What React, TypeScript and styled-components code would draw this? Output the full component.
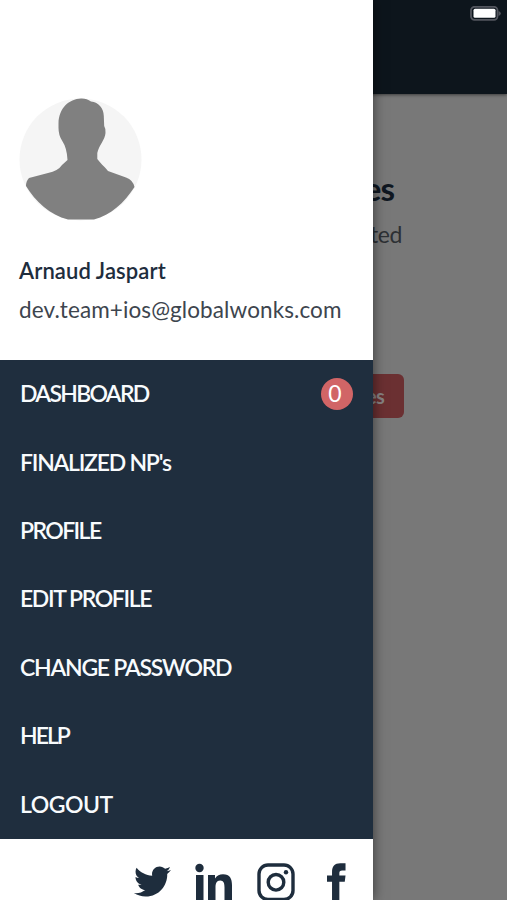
import React from "react";
import styled, { createGlobalStyle } from "styled-components";
import { FaTwitter } from "react-icons/fa";

const GlobalStyle = createGlobalStyle`
  *, *::before, *::after { box-sizing: border-box; }
  body { margin: 0; overflow: hidden; font-family: Lato, "Open Sans", sans-serif; }
`;

const Screen = styled.div`
  position: relative;
  width: 507px;
  height: 900px;
  overflow: hidden;
  background: #787878;
`;

const TopBar = styled.header`
  height: 93.5px;
  padding: 6px 5.5px 0 0;
  display: flex;
  justify-content: flex-end;
  align-items: flex-start;
  background: #0d151c;
  box-shadow: 0 1px 3px rgba(0, 0, 0, 0.5);
`;

const Page = styled.main`
  display: flex;
  flex-direction: column;
  align-items: flex-end;
`;

const PageTitle = styled.h1`
  margin: 74px 113px 0 0;
  font: 700 33px/40px Lato, sans-serif;
  letter-spacing: -1px;
  color: #0f1721;
`;

const PageText = styled.p`
  margin: 11px 105px 0 0;
  font: 400 23px/30px Lato, sans-serif;
  letter-spacing: -0.4px;
  color: #2d3034;
`;

const PageButton = styled.button`
  margin: 125px 103px 0 0;
  width: 300px;
  height: 44px;
  padding: 0 20px 0 0;
  border: 0;
  border-radius: 6px;
  background: #6b3032;
  color: #868282;
  text-align: right;
  font: 700 20px/40px Lato, sans-serif;
  letter-spacing: -0.7px;
`;

const Drawer = styled.aside`
  position: absolute;
  inset: 0 auto 0 0;
  width: 372.5px;
  display: flex;
  flex-direction: column;
  background: #fff;
  box-shadow: 0 0 12px rgba(0, 0, 0, 0.55);
`;

const Profile = styled.section`
  height: 360px;
  padding: 98px 19px 0;
`;

const Portrait = styled.svg`
  display: block;
  width: 123px;
  height: 123px;
`;

const Name = styled.div`
  width: max-content;
  margin-top: 36px;
  font-size: 22px;
  line-height: 28px;
  font-weight: 600;
  letter-spacing: 0.1px;
  color: #1e2d3d;
`;

const Email = styled.div`
  width: max-content;
  margin-top: 11px;
  font-size: 22.5px;
  line-height: 28px;
  letter-spacing: 0.1px;
  color: #3d454e;
`;

const Menu = styled.nav`
  height: 479px;
  background: #1f2e3e;
`;

const MenuItem = styled.a`
  display: flex;
  align-items: center;
  justify-content: space-between;
  height: 68.4px;
  padding: 0 20px;
  color: #f8fbfd;
`;

const Label = styled.span<{ $tracking: number }>`
  padding-bottom: 2px;
  font-size: 23px;
  line-height: 28px;
  font-weight: 600;
  white-space: nowrap;
  letter-spacing: ${(p) => p.$tracking}px;
`;

const Count = styled.span`
  width: 32px;
  height: 32px;
  border-radius: 50%;
  padding-right: 3px;
  background: #d16566;
  color: #fff;
  text-align: center;
  font-size: 23px;
  line-height: 31px;
`;

const Socials = styled.footer`
  flex: 1;
  display: flex;
  align-items: flex-start;
  justify-content: flex-end;
  gap: 24px;
  padding: 24px 27px 0 0;
  color: #1e2d3d;
  overflow: hidden;
`;

const SocialIcon = styled.svg<{ $w: number; $lead?: number }>`
  display: block;
  flex: none;
  width: ${(p) => p.$w}px;
  height: 38px;
  margin-left: ${(p) => p.$lead ?? 0}px;
`;

const Bird = styled(FaTwitter)`
  display: block;
  flex: none;
  width: 37px;
  height: 37px;
`;

const items = [
  { text: "DASHBOARD", tracking: -1.7, count: 0 },
  { text: "FINALIZED NP's", tracking: -1.25 },
  { text: "PROFILE", tracking: -1.6 },
  { text: "EDIT PROFILE", tracking: -1.4 },
  { text: "CHANGE PASSWORD", tracking: -1.25 },
  { text: "HELP", tracking: -2 },
  { text: "LOGOUT", tracking: -0.5 },
];

export default function App() {
  return (
    <Screen>
      <GlobalStyle />
      <TopBar>
        <svg width="32" height="15" viewBox="0 0 32 15">
          <rect x="1" y="0.8" width="26.5" height="13" rx="3.5" fill="none" stroke="#53565e" strokeWidth="1.8" />
          <rect x="3.5" y="2.800" width="22" height="9" rx="1.5" fill="#fff" />
          <path d="M28.500 5v5q2.300-.8 2.300-2.500T28.500 5z" fill="#53565e" />
        </svg>
      </TopBar>
      <Page>
        <PageTitle>es</PageTitle>
        <PageText>ted</PageText>
        <PageButton>es</PageButton>
      </Page>
      <Drawer>
        <Profile>
          <Portrait viewBox="0 0 123 123">
            <circle cx="61.5" cy="61.5" r="61" fill="#f5f5f5" />
            <path
              fill="#808080"
              d="M62 .5C66 .3 69 1.500 72 3.500C80 4.500 84.500 10 84.800 18L85.200 28Q87 31 86.500 35C86 42 80 47 78.300 55V61C81 65 85 68 89 73L107 79.500Q114 82 115.500 89C105 105 92 117 75 121.500H49C31 117 16 103 7 88Q7 83 10 80L29 75Q39 73 43 67L48.500 62Q48 50 43 42.500Q39.500 37 39.500 30V25C40 10 50 1 62 .5Z"
            />
          </Portrait>
          <Name>Arnaud Jaspart</Name>
          <Email>dev.team+ios@globalwonks.com</Email>
        </Profile>
        <Menu>
          {items.map((item) => (
            <MenuItem key={item.text}>
              <Label $tracking={item.tracking}>{item.text}</Label>
              {item.count !== undefined && <Count>{item.count}</Count>}
            </MenuItem>
          ))}
        </Menu>
        <Socials>
          <Bird />
          <SocialIcon $w={38} viewBox="0 0 38 38" fill="currentColor">
            <circle cx="4.500" cy="5" r="4.200" />
            <path d="M1 12h7.500v26H1zM13 12h7v3.500C22 12.700 24.500 11.300 28 11.300c7 0 9 4.500 9 11V38h-7.500V24.500c0-4-.7-7-4.300-7-3.700 0-4.700 3-4.700 7V38H13z" />
          </SocialIcon>
          <SocialIcon $w={38} viewBox="0 0 38 38" fill="none" stroke="currentColor" strokeWidth="3.400">
            <rect x="2" y="2" width="34" height="34.500" rx="9" />
            <circle cx="19" cy="19.300" r="7.800" />
            <circle cx="29" cy="9.300" r="2.200" fill="currentColor" stroke="none" />
          </SocialIcon>
          <SocialIcon $w={19} $lead={8} viewBox="0 0 20 38" preserveAspectRatio="none" fill="currentColor">
            <path d="M19.500 .3v7.200H16c-2.300 0-3 .8-3 3V12.500h6.500l-.8 6.200H13V38H5.300V18.700H0V12.500h5.300V9C5.300 3.300 8 .3 14 .3z" />
          </SocialIcon>
        </Socials>
      </Drawer>
    </Screen>
  );
}
